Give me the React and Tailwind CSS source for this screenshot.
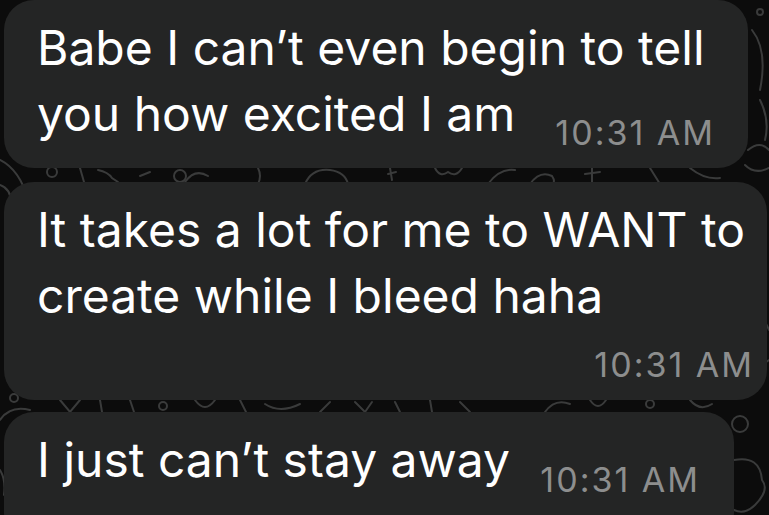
import React from "react";

function Doodles() {
  const s = "#3a3b3b";
  return (
    <svg className="absolute inset-0" width="769" height="515" viewBox="0 0 769 515" fill="none" stroke={s} strokeWidth="2" strokeLinecap="round">
      <path d="M0 160 Q20 170 28 200" />
      <path d="M0 185 Q15 190 10 215" />
      <circle cx="52" cy="172" r="5" />
      <path d="M80 168 L84 182" />
      <path d="M98 170 Q108 172 112 178 L118 182" />
      <path d="M140 176 L150 172" />
      <path d="M185 182 Q195 168 208 176" />
      <circle cx="180" cy="176" r="6" />
      <path d="M258 168 Q262 176 258 184" />
      <path d="M305 184 Q312 168 330 170 Q345 172 348 184" />
      <path d="M390 168 L392 180 M388 174 L396 172" />
      <path d="M435 168 Q440 178 448 172 Q456 178 462 168" />
      <path d="M488 184 Q500 168 515 170" />
      <path d="M530 184 Q540 170 552 176 Q556 182 552 184" />
      <path d="M585 174 L600 172 M592 168 L592 182" />
      <path d="M650 168 L660 184" />
      <path d="M690 168 Q705 180 720 178" />
      <path d="M748 150 Q760 140 769 150" />
      <path d="M745 165 Q755 175 769 168" />
      <path d="M752 30 Q768 50 760 90" />
      <path d="M760 100 Q770 120 765 140" />
      <circle cx="760" cy="12" r="3" />
      <circle cx="14" cy="398" r="4" />
      <path d="M0 420 Q10 405 30 410" />
      <path d="M60 400 L70 412 L80 400" />
      <path d="M100 400 L102 412" />
      <path d="M130 400 L134 412" />
      <circle cx="163" cy="406" r="4" />
      <path d="M195 400 Q205 414 215 400" />
      <path d="M240 400 L246 412" />
      <path d="M265 404 Q280 414 300 404" />
      <path d="M320 412 L330 402" />
      <path d="M355 402 L365 412 L372 402" />
      <path d="M395 402 L400 412" />
      <path d="M430 400 L432 412" />
      <path d="M460 402 L470 412" />
      <path d="M545 412 Q555 398 570 404" />
      <path d="M590 400 Q598 412 606 400" />
      <circle cx="650" cy="404" r="4" />
      <path d="M690 400 Q700 412 712 404" />
      <circle cx="740" cy="424" r="8" />
      <path d="M734 460 Q760 455 762 480 Q770 490 755 505 Q745 515 734 510" />
      <path d="M0 470 Q6 480 4 495" />
      <path d="M755 370 L769 360" />
      <path d="M752 300 Q765 320 769 330" />
    </svg>
  );
}

export default function App() {
  return (
    <div
      className="relative w-[769px] h-[515px] overflow-hidden bg-[#0c0c0c]"
      style={{ fontFamily: "Inter, Roboto, 'Liberation Sans', sans-serif" }}
    >
      <Doodles />
      <div className="relative flex flex-col gap-[14px]">
        {/* Bubble 1 */}
        <div className="ml-[4px] w-[744px] h-[168px] rounded-[30px] bg-[#242525] pl-[33px] pt-[15px]">
          <div className="text-[48px] leading-[66px] text-white whitespace-nowrap">
            Babe I can’t even begin to tell
          </div>
          <div className="flex items-start">
            <span className="text-[48px] leading-[66px] text-white whitespace-nowrap">
              you how excited I am
            </span>
            <span className="ml-auto mr-[33px] mt-[35px] text-[34px] leading-none tracking-[2px] text-[#8d8e8e] whitespace-nowrap">
              10:31 AM
            </span>
          </div>
        </div>
        {/* Bubble 2 */}
        <div className="ml-[4px] w-[763px] h-[218px] rounded-[30px] bg-[#242525] pl-[33px] pt-[15px] flex flex-col">
          <div className="text-[48px] leading-[66px] text-white whitespace-nowrap">
            It takes a lot for me to WANT to
          </div>
          <div className="text-[48px] leading-[66px] text-white whitespace-nowrap">
            create while I bleed haha
          </div>
          <div className="self-end mr-[13px] mt-[19px] text-[34px] leading-none tracking-[2px] text-[#8d8e8e] whitespace-nowrap">
            10:31 AM
          </div>
        </div>
        {/* Bubble 3 */}
        <div className="ml-[4px] w-[730px] h-[130px] rounded-[30px] bg-[#242525] pl-[33px] pt-[15px] flex items-start -mt-[2px]">
          <span className="text-[48px] leading-[66px] text-white whitespace-nowrap">
            I just can’t stay away
          </span>
          <span className="ml-auto mr-[34px] mt-[36px] text-[34px] leading-none tracking-[2px] text-[#8d8e8e] whitespace-nowrap">
            10:31 AM
          </span>
        </div>
      </div>
    </div>
  );
}
